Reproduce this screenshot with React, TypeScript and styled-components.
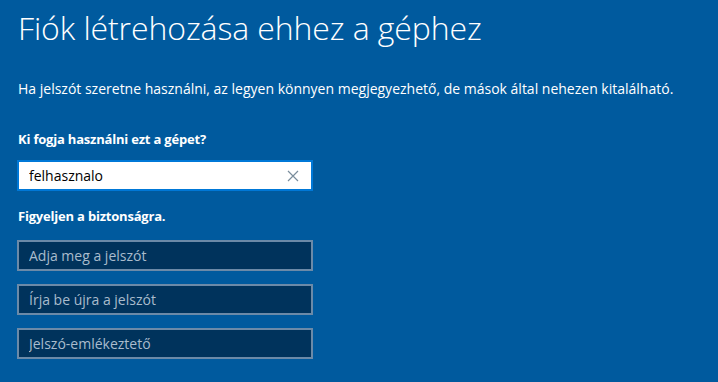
import React, { useState } from 'react';
import styled, { createGlobalStyle } from 'styled-components';

const GlobalStyle = createGlobalStyle`
  html, body {
    margin: 0;
    padding: 0;
    background: #005a9e;
  }
  body {
    font-family: 'Open Sans', 'Noto Sans', sans-serif;
    color: #ffffff;
  }
`;

const PASSWORD_FIELDS = [
  'Adja meg a jelszót',
  'Írja be újra a jelszót',
  'Jelszó-emlékeztető',
];

export default function App() {
  const [userName, setUserName] = useState<string>('felhasznalo');

  return (
    <>
      <GlobalStyle />
      <S_Page>
        <S_Title>Fiók létrehozása ehhez a géphez</S_Title>
        <S_Intro>
          Ha jelszót szeretne használni, az legyen könnyen megjegyezhető, de
          mások által nehezen kitalálható.
        </S_Intro>
        <S_Label>Ki fogja használni ezt a gépet?</S_Label>
        <S_NameBox>
          <S_NameInput
            value={userName}
            onChange={e => setUserName(e.target.value)}
          />
          <S_ClearBtn onClick={() => setUserName('')} aria-label="Törlés">
            <svg width="12" height="12" viewBox="0 0 12 12">
              <path
                d="M1 1 L11 11 M11 1 L1 11"
                stroke="#7a8d9c"
                strokeWidth="1.2"
                fill="none"
              />
            </svg>
          </S_ClearBtn>
        </S_NameBox>
        <S_Label2>Figyeljen a biztonságra.</S_Label2>
        <S_FieldList>
          {PASSWORD_FIELDS.map((text, idx) => (
            <S_DarkInput
              key={idx}
              type={idx < 2 ? 'password' : 'text'}
              placeholder={text}
            />
          ))}
        </S_FieldList>
      </S_Page>
    </>
  );
}

const S_Page = styled.div`
  display: flex;
  flex-flow: column;
  align-items: flex-start;
  padding: 6px 0 0 17px;
  width: 718px;
  height: 382px;
  box-sizing: border-box;
  overflow: hidden;
`;

const S_Title = styled.h1`
  margin: 0;
  font-weight: 300;
  font-size: 32px;
  line-height: 44px;
  padding-left: 1px;
  letter-spacing: -0.1px;
`;

const S_Intro = styled.p`
  margin: 30px 0 0 1px;
  font-size: 14px;
  line-height: 18px;
`;

const S_Label = styled.div`
  margin: 32px 0 0 1px;
  font-size: 13px;
  font-weight: 700;
  line-height: 18px;
  letter-spacing: -0.2px;
`;

const S_Label2 = styled(S_Label)`
  margin-top: 16px;
`;

const S_NameBox = styled.div`
  margin-top: 12px;
  width: 296px;
  height: 31px;
  box-sizing: border-box;
  border: 2px solid #0078d7;
  background: #ffffff;
  display: flex;
  align-items: center;
  padding: 0 12px 0 10px;
`;

const S_NameInput = styled.input`
  flex: 1;
  border: none;
  outline: none;
  background: transparent;
  font-family: inherit;
  font-size: 14px;
  color: #000000;
  padding: 0;
`;

const S_ClearBtn = styled.button`
  border: none;
  background: transparent;
  padding: 0;
  display: flex;
  cursor: pointer;
`;

const S_FieldList = styled.div`
  display: flex;
  flex-flow: column;
  gap: 13px;
  margin-top: 15px;
`;

const S_DarkInput = styled.input`
  width: 296px;
  height: 31px;
  box-sizing: border-box;
  border: 2px solid #6b8aa8;
  background: #00335c;
  color: #ffffff;
  font-family: inherit;
  font-size: 14px;
  padding: 0 10px;
  outline: none;
  &::placeholder {
    color: #a9bccd;
  }
`;
